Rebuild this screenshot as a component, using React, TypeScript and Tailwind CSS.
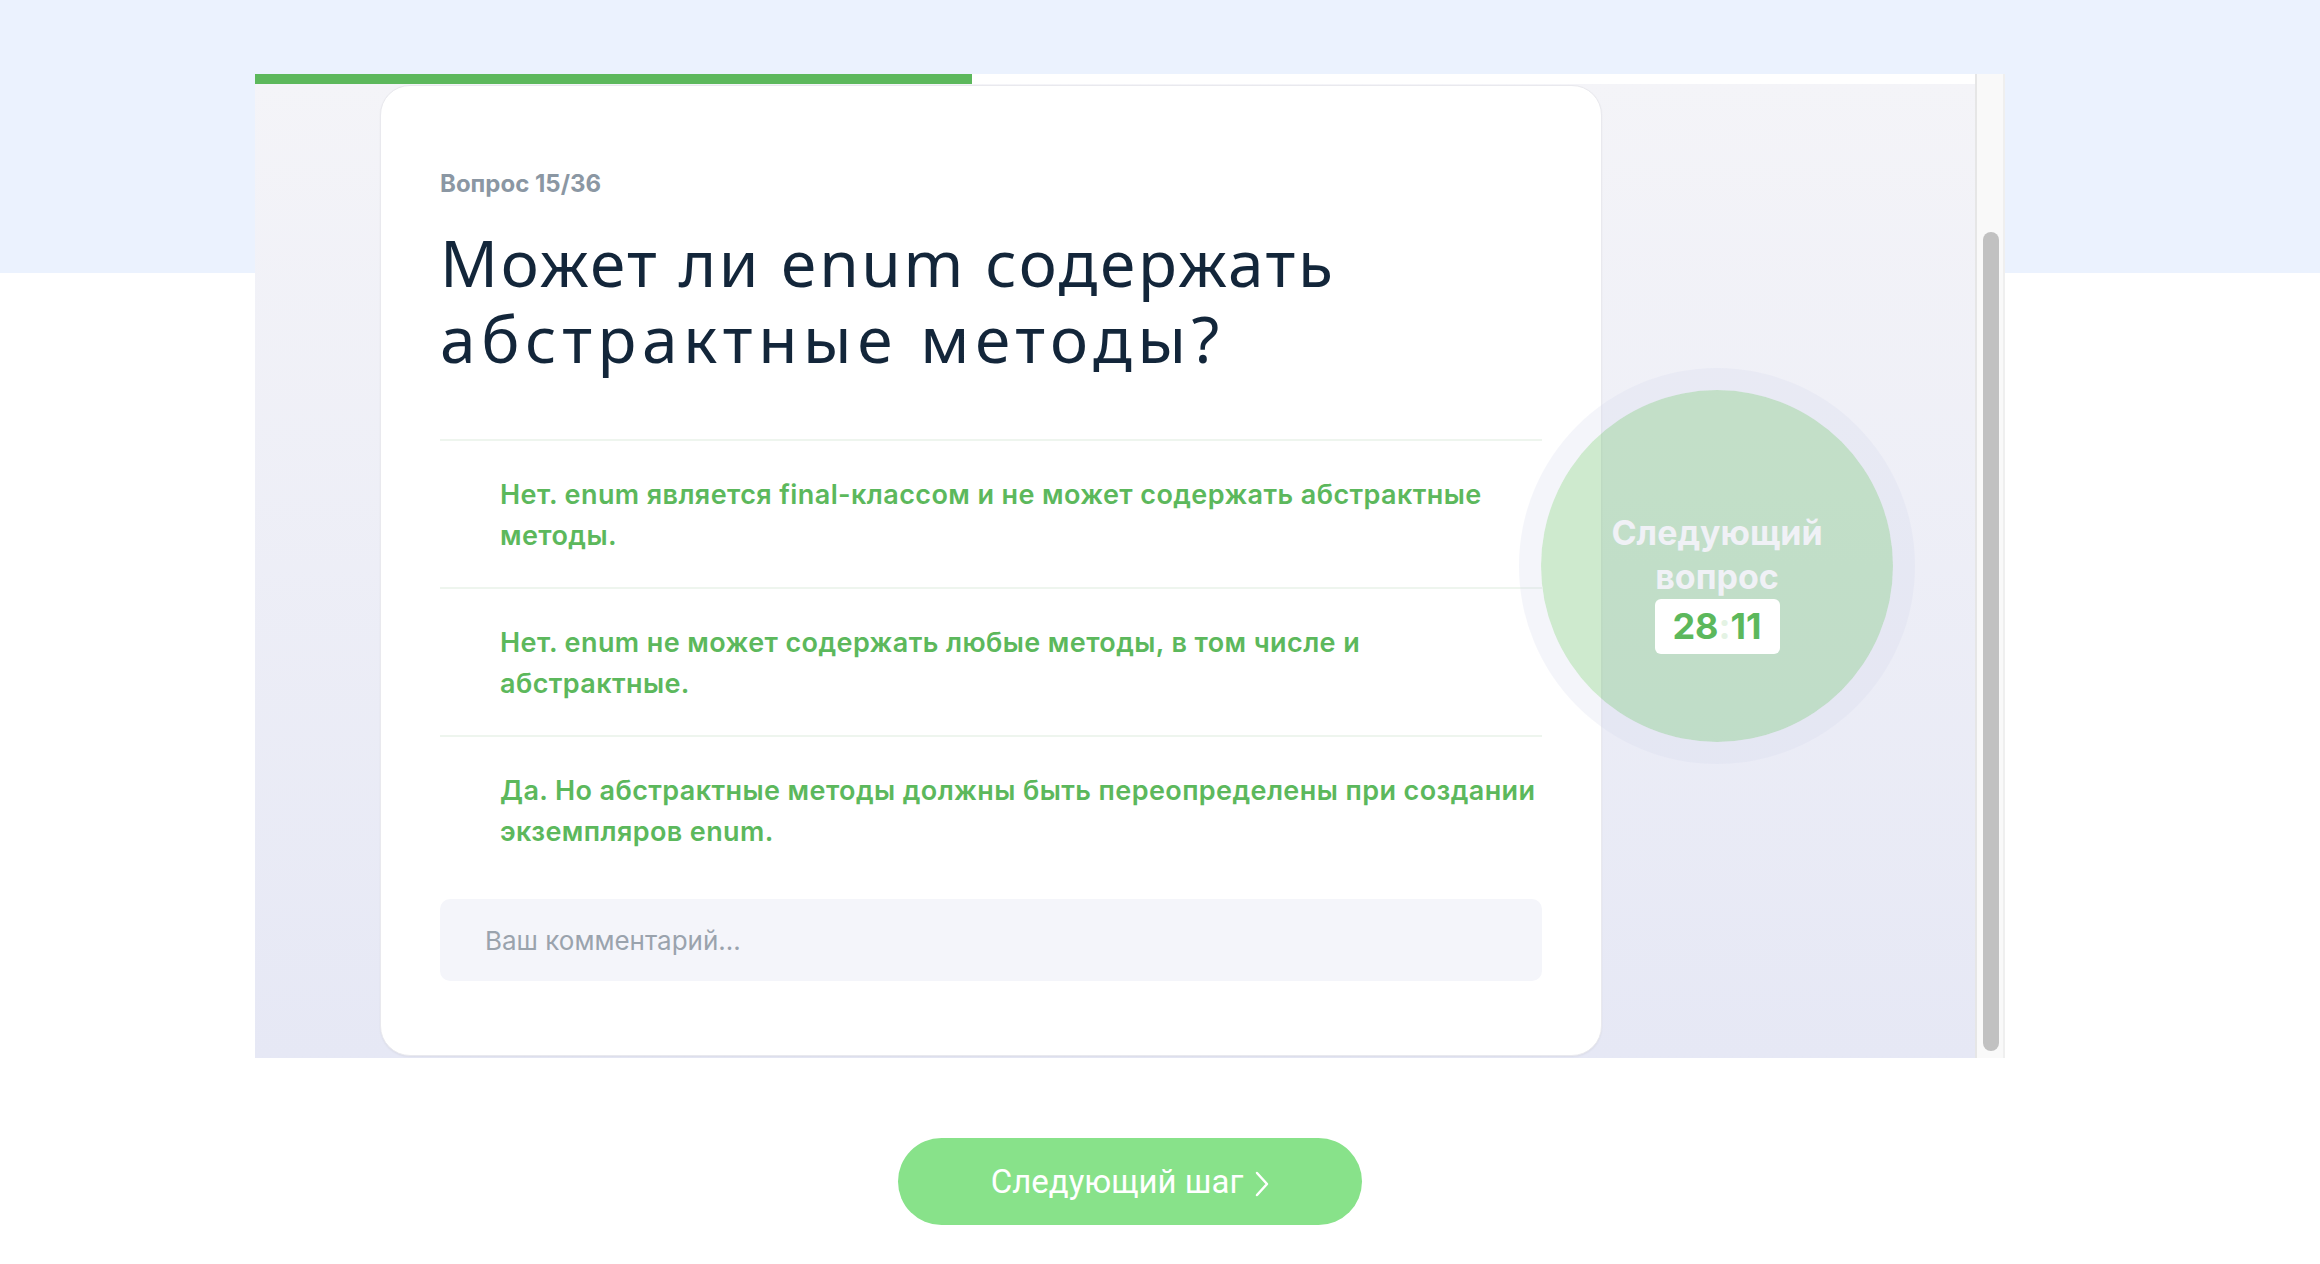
const options = [
  ["Нет. enum является final-классом и не может содержать абстрактные", "методы."],
  ["Нет. enum не может содержать любые методы, в том числе и", "абстрактные."],
  ["Да. Но абстрактные методы должны быть переопределены при создании", "экземпляров enum."],
];

const ui = { fontFamily: "Inter, 'Noto Sans', sans-serif" };

export default function App() {
  return (
    <div
      className="min-h-[1264px] w-full bg-[linear-gradient(to_bottom,#ebf2fe_273px,#ffffff_273px)] pt-[74px]"
      style={ui}
    >
      {/* ============ QUIZ FRAME ============ */}
      <div className="ml-[255px] flex h-[984px] w-[1750px]">
        <div className="flex w-[1720px] flex-col">
          {/* progress */}
          <div className="flex h-[10px] bg-white">
            <div className="h-full w-[717px] bg-[#5cb85c]" />
          </div>

          <div className="relative flex-1 overflow-hidden bg-gradient-to-b from-[#f4f4f8] to-[#e6e8f5]">
            {/* card */}
            <div className="ml-[125px] mt-px h-[971px] w-[1222px] rounded-[30px] border border-[#e9e9ee] bg-white px-[59px] pt-[83px] shadow-[0_1px_2px_rgba(0,0,0,0.05)]">
              <p className="text-[24px] font-bold leading-[30px] text-[#8b97a3]">Вопрос 15/36</p>

              <h1
                className="mt-[26px] text-[64px] font-normal leading-[76px] text-[#13263a]"
                style={{ fontFamily: "'Noto Sans', sans-serif" }}
              >
                <span className="block tracking-[2.6px]">Может ли enum содержать</span>
                <span className="block tracking-[5.6px]">абстрактные методы?</span>
              </h1>

              <div className="mt-[62px]">
                {options.map((lines) => (
                  <div key={lines[0]} className="border-t-2 border-[#eef5ee] pb-[31px] pl-[60px] pt-[33px]">
                    {lines.map((line) => (
                      <p
                        key={line}
                        className="whitespace-nowrap text-[27px] font-semibold leading-[41px] tracking-[0.4px] text-[#5cb85c]"
                      >
                        {line}
                      </p>
                    ))}
                  </div>
                ))}
              </div>

              <div className="mt-[16px] flex h-[82px] items-center rounded-[10px] bg-[#f4f5fa] px-[45px]">
                <span className="text-[26px] text-[#9aa3ad]">Ваш комментарий...</span>
              </div>
            </div>

            {/* next question bubble */}
            <div className="absolute left-[1264px] top-[284px] flex h-[396px] w-[396px] flex-col items-center justify-center rounded-full border-[22px] border-[#d2d6eb]/25 bg-[#5cb85c]/30 bg-clip-padding pt-[32px]">
              <p className="text-center text-[34px] font-bold leading-[44px] text-[#f0f1f6]">
                Следующий
                <br />
                вопрос
              </p>
              <div className="flex h-[55px] w-[125px] items-center justify-center rounded-[6px] bg-white text-[36px] font-bold text-[#5cb85c]">
                28<span className="text-[#e4f3e4]">:</span>11
              </div>
            </div>
          </div>
        </div>

        {/* scrollbar */}
        <div className="w-[30px] border-l-2 border-r-2 border-l-[#e6e6e6] border-r-[#efefef] bg-[#f9f9f9] pl-[6px] pt-[158px]">
          <div className="h-[819px] w-[16px] rounded-full bg-[#c1c1c1]" />
        </div>
      </div>

      {/* ============ NEXT STEP ============ */}
      <div className="ml-[898px] mt-[80px]">
        <button
          className="flex h-[87px] w-[464px] items-center justify-center gap-[12px] rounded-full bg-[#88e28a] text-[33px] text-white"
          style={{ fontFamily: "Roboto, sans-serif" }}
        >
          Следующий шаг
          <svg width="14" height="26" viewBox="0 0 14 26" fill="none" className="mt-[4px]">
            <polyline points="2,2 12,13 2,24" stroke="white" strokeWidth="2.5" strokeLinecap="round" strokeLinejoin="round" />
          </svg>
        </button>
      </div>
    </div>
  );
}
